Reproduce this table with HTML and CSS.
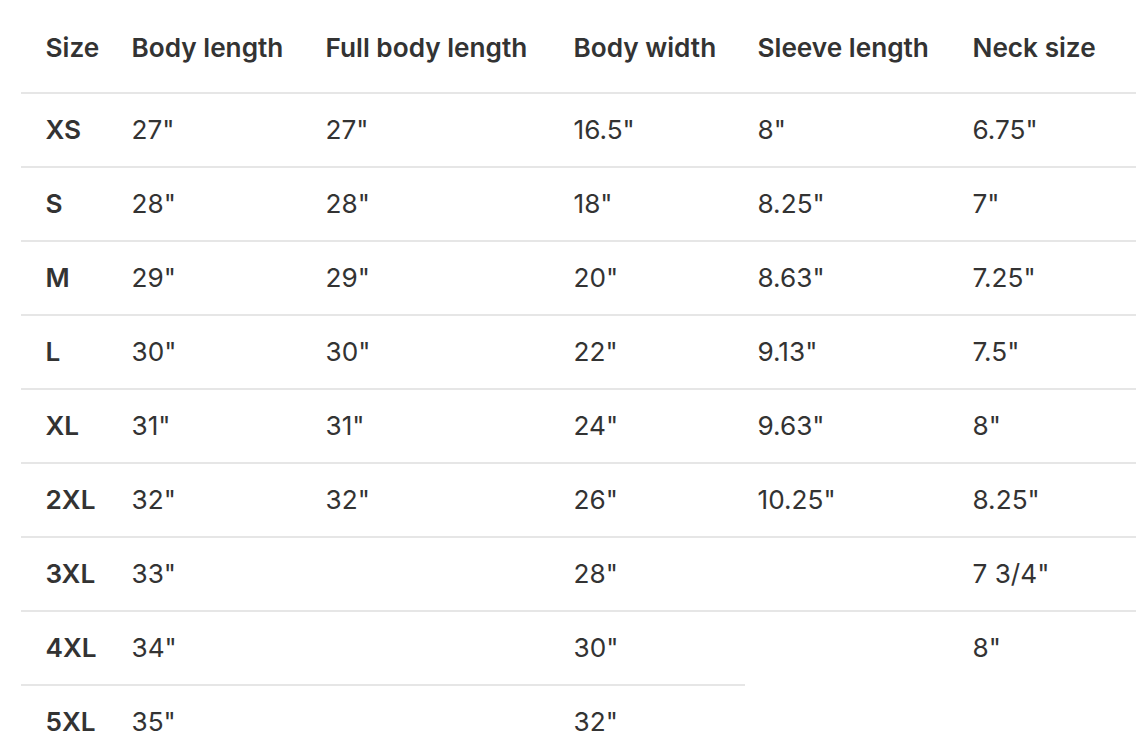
FILE: index.html
```html
<!DOCTYPE html>
<html lang="en">
<head>
<meta charset="utf-8">
<title>Size chart</title>
<link rel="stylesheet" href="styles.css">
</head>
<body>
<div class="wrap">
<table class="sizes">
  <colgroup>
    <col class="c1"><col class="c2"><col class="c3"><col class="c4"><col class="c5"><col class="c6">
  </colgroup>
  <thead>
    <tr><th>Size</th><th>Body length</th><th>Full body length</th><th>Body width</th><th>Sleeve length</th><th>Neck size</th></tr>
  </thead>
  <tbody>
    <tr><td class="sz">XS</td><td>27"</td><td>27"</td><td>16.5"</td><td>8"</td><td>6.75"</td></tr>
    <tr><td class="sz">S</td><td>28"</td><td>28"</td><td>18"</td><td>8.25"</td><td>7"</td></tr>
    <tr><td class="sz">M</td><td>29"</td><td>29"</td><td>20"</td><td>8.63"</td><td>7.25"</td></tr>
    <tr><td class="sz">L</td><td>30"</td><td>30"</td><td>22"</td><td>9.13"</td><td>7.5"</td></tr>
    <tr><td class="sz">XL</td><td>31"</td><td>31"</td><td>24"</td><td>9.63"</td><td>8"</td></tr>
    <tr><td class="sz">2XL</td><td>32"</td><td>32"</td><td>26"</td><td>10.25"</td><td>8.25"</td></tr>
    <tr><td class="sz">3XL</td><td>33"</td><td></td><td>28"</td><td></td><td>7 3/4"</td></tr>
    <tr><td class="sz">4XL</td><td>34"</td><td></td><td>30"</td><td></td><td>8"</td></tr>
    <tr><td class="sz">5XL</td><td>35"</td><td></td><td>32"</td></tr>
  </tbody>
</table>
</div>
</body>
</html>
```

FILE: styles.css
```css
html, body {
  margin: 0;
  padding: 0;
  background: #ffffff;
}

body {
  font-family: Inter, "Noto Sans", "Liberation Sans", sans-serif;
  color: #333333;
  overflow: hidden;
}

.wrap {
  padding-left: 21px;
}

.sizes {
  width: 1115px;
  table-layout: fixed;
  border-collapse: separate;
  border-spacing: 0;
  font-size: 26.2px;
}

.c1 { width: 98px; }
.c2 { width: 194px; }
.c3 { width: 248px; }
.c4 { width: 184px; }
.c5 { width: 215px; }
.c6 { width: 176px; }

.sizes th {
  text-align: left;
  font-weight: 600;
  height: 89px;
  padding: 3px 0 0 12.5px;
  vertical-align: middle;
  white-space: nowrap;
}

.sizes td {
  height: 70px;
  padding: 0 0 2px 12.5px;
  border-top: 2px solid #e6e6e6;
  vertical-align: middle;
  font-weight: 400;
  white-space: nowrap;
}

.sizes th:first-child,
.sizes td:first-child {
  padding-left: 24.5px;
}

.sizes td.sz {
  font-weight: 600;
}
```
